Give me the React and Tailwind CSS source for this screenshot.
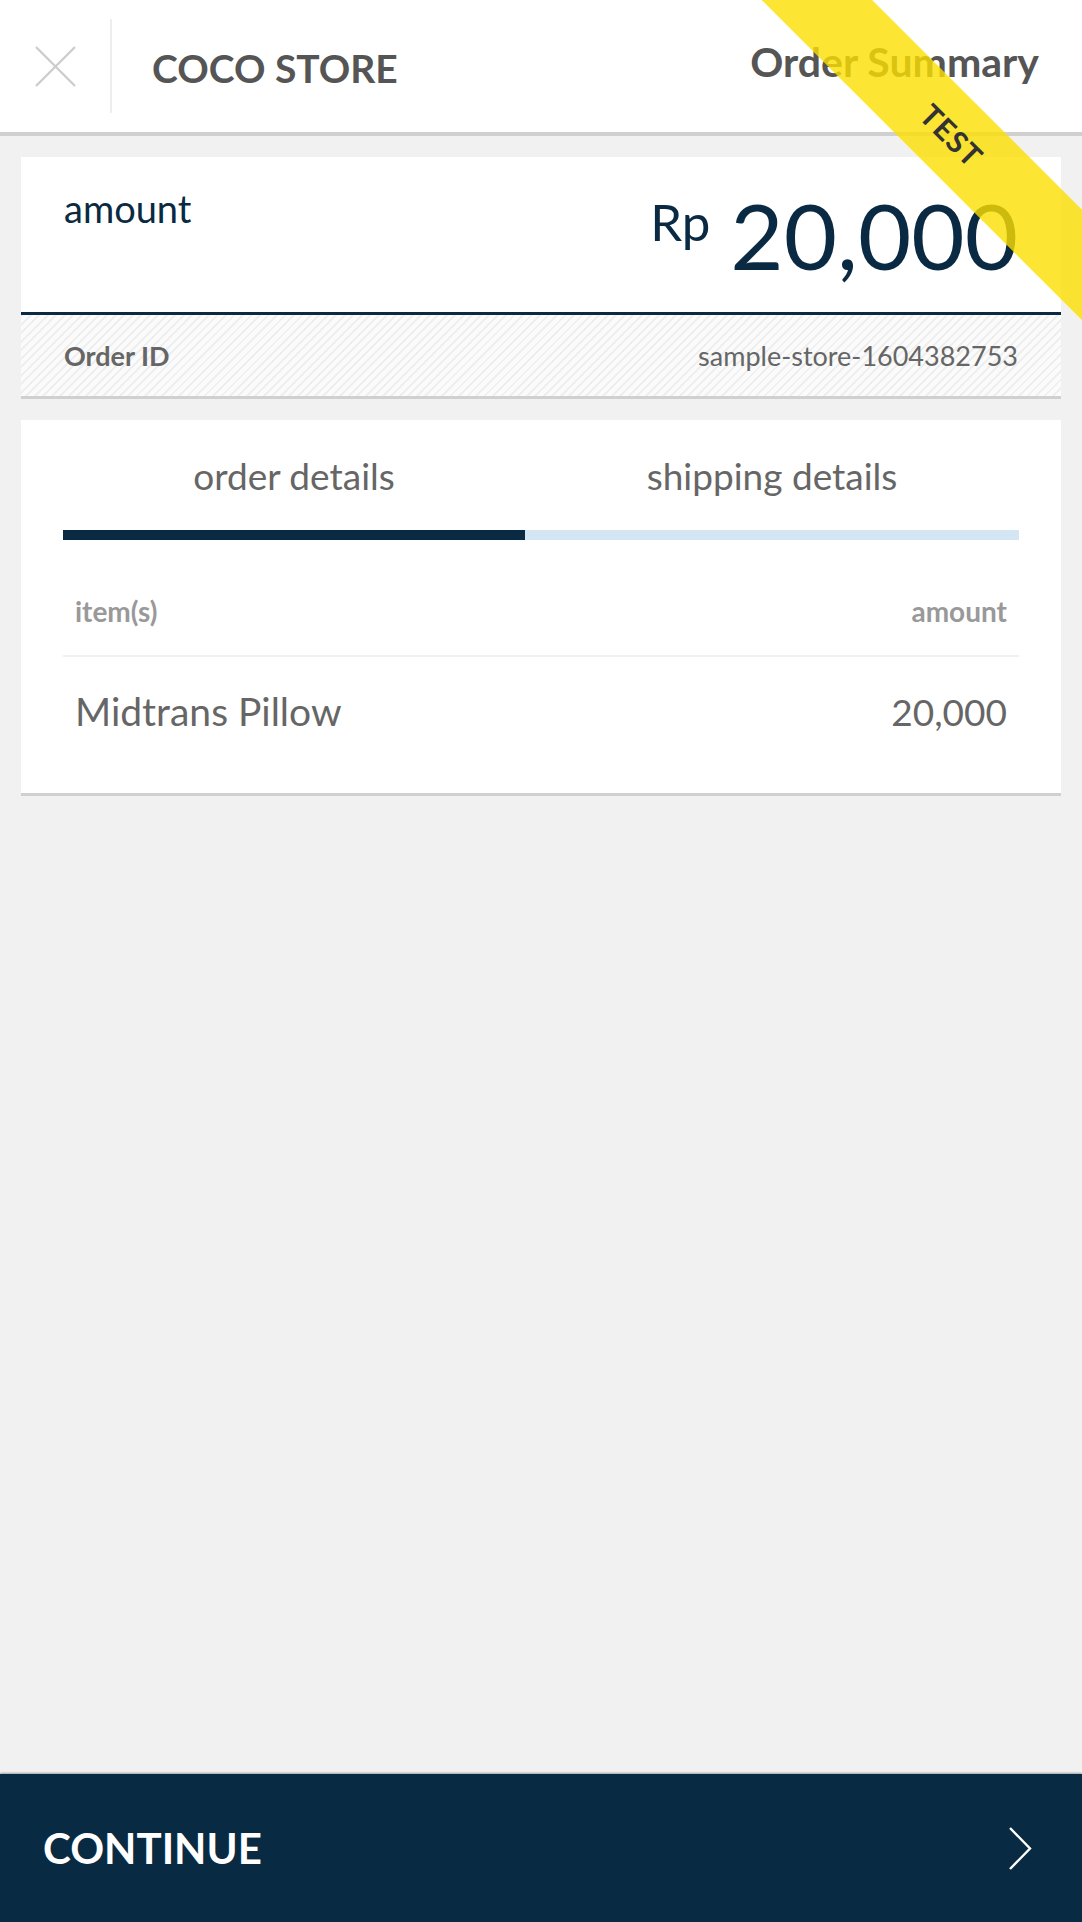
function CloseIcon() {
  return (
    <svg width="41" height="41" viewBox="0 0 41 41" fill="none">
      <path d="M1 1L40 40M40 1L1 40" stroke="#cccccc" strokeWidth="2.2" />
    </svg>
  );
}

function ChevronRight() {
  return (
    <svg width="24" height="43" viewBox="0 0 24 43" fill="none">
      <path d="M2 1L22 21.5L2 42" stroke="#ffffff" strokeWidth="2.4" />
    </svg>
  );
}

function TestRibbon() {
  return (
    <div className="pointer-events-none absolute right-0 top-0 z-20 h-[320px] w-[320px] overflow-hidden">
      <div className="absolute left-[-50px] top-[96px] flex h-[78px] w-[480px] rotate-45 items-center justify-center bg-[rgba(253,224,0,0.8)]">
        <span className="text-[30px] font-bold leading-none tracking-[1px] text-[#333333]">TEST</span>
      </div>
    </div>
  );
}

function AmountCard() {
  return (
    <div className="bg-white">
      <div className="flex h-[158px] items-start justify-between border-b-[3px] border-[#0a2a43] px-[43px] pt-[32px]">
        <span className="text-[38px] leading-none text-[#0a2a43]">amount</span>
        <div className="flex items-start gap-[20px] text-[#0a2a43]">
          <span className="mt-[7px] text-[51px] leading-none">Rp</span>
          <span className="text-[92px] leading-none">20,000</span>
        </div>
      </div>
      <div className="flex h-[84px] items-center justify-between border-b-[3px] border-[#d0d0d0] bg-[image:repeating-linear-gradient(135deg,#efefef_0px,#efefef_2px,#fbfbfb_2px,#fbfbfb_6px)] px-[43px]">
        <span className="text-[27px] font-bold leading-none text-[#666666]">Order ID</span>
        <span className="text-[27px] leading-none text-[#666666]">sample-store-1604382753</span>
      </div>
    </div>
  );
}

function DetailsCard() {
  return (
    <div className="h-[376px] border-b-[3px] border-[#d0d0d0] bg-white px-[42px]">
      <div className="flex pt-[34px]">
        <div className="w-[462px] text-center text-[37px] leading-[44px] text-[#666666]">order details</div>
        <div className="flex-1 text-center text-[37px] leading-[44px] text-[#666666]">shipping details</div>
      </div>
      <div className="mt-[32px] flex h-[10px]">
        <div className="w-[462px] bg-[#0a2a43]" />
        <div className="flex-1 bg-[#d4e6f4]" />
      </div>
      <div className="mt-[54px] flex justify-between px-[12px] text-[28px] font-bold leading-[34px] text-[#999999]">
        <span>item(s)</span>
        <span>amount</span>
      </div>
      <div className="mt-[27px] h-[2px] bg-[#f1f1f1]" />
      <div className="mt-[31px] flex justify-between px-[12px] text-[#666666]">
        <span className="text-[39px] leading-[47px]">Midtrans Pillow</span>
        <span className="text-[37px] leading-[47px]">20,000</span>
      </div>
    </div>
  );
}

export default function App() {
  return (
    <div className="relative flex min-h-screen flex-col overflow-hidden bg-[#f1f1f1] font-['Lato','Noto_Sans',sans-serif]">
      <header className="flex h-[136px] items-center border-b-4 border-[#d0d0d0] bg-white">
        <button type="button" className="flex w-[110px] items-center justify-center">
          <CloseIcon />
        </button>
        <div className="h-[94px] w-[2px] bg-[#eeeeee]" />
        <h1 className="ml-[40px] mt-[4px] text-[39px] font-bold leading-none text-[#555555]">COCO STORE</h1>
        <div className="ml-auto mr-[43px] -mt-[10px] text-[41px] font-bold leading-none text-[#555555]">Order Summary</div>
      </header>

      <main className="flex-1 px-[21px] pt-[21px]">
        <AmountCard />
        <div className="mt-[21px]">
          <DetailsCard />
        </div>
      </main>

      <button
        type="button"
        className="flex h-[148px] items-center justify-between bg-[#082a42] pl-[43px] pr-[50px] shadow-[0_-1px_2px_rgba(0,0,0,0.35)]"
      >
        <span className="text-[42px] font-bold leading-none text-white">CONTINUE</span>
        <ChevronRight />
      </button>

      <TestRibbon />
    </div>
  );
}
